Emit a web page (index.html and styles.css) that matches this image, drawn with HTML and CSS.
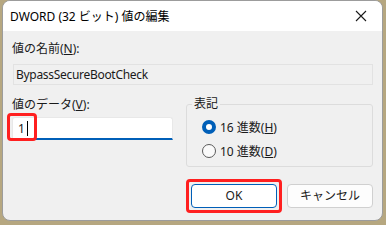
FILE: index.html
```html
<!DOCTYPE html>
<html lang="ja">
<head>
  <meta charset="UTF-8">
  <title>DWORD (32 ビット) 値の編集</title>
  <link rel="stylesheet" href="styles.css">
</head>
<body>
  <div class="window">
    <div class="title-bar">
      <span class="title">DWORD (32 ビット) 値の編集</span>
      <svg class="close" width="12" height="12" viewBox="0 0 12 12">
        <path d="M1 1 L11 11 M11 1 L1 11" stroke="#1a1a1a" stroke-width="1.1" fill="none"/>
      </svg>
    </div>
    <div class="content">
      <div class="label">値の名前(<u>N</u>):</div>
      <div class="name-box">BypassSecureBootCheck</div>
      <div class="row">
        <div class="data-col">
          <div class="label">値のデータ(<u>V</u>):</div>
          <div class="data-input">
            <span class="value">1</span><span class="caret"></span>
            <div class="mark mark-input"></div>
          </div>
        </div>
        <fieldset class="group">
          <legend>表記</legend>
          <div class="radios">
            <div class="radio-row">
              <span class="radio checked"></span>
              <span>16 進数(<u>H</u>)</span>
            </div>
            <div class="radio-row">
              <span class="radio"></span>
              <span>10 進数(<u>D</u>)</span>
            </div>
          </div>
        </fieldset>
      </div>
      <div class="buttons">
        <div class="btn btn-default">OK<div class="mark mark-ok"></div></div>
        <div class="btn">キャンセル</div>
      </div>
    </div>
  </div>
</body>
</html>
```

FILE: styles.css
```css
html, body {
  margin: 0;
  padding: 0;
  height: 100%;
  overflow: hidden;
}
body {
  background: #b6a780;
  font-family: "Noto Sans", "Noto Sans CJK JP", sans-serif;
  font-size: 12px;
  color: #1a1a1a;
}
.window {
  box-sizing: border-box;
  margin-left: 2px;
  width: 381px;
  height: 221px;
  border: 1px solid #9c9c9c;
  border-radius: 8px;
  background: #f0f0f0;
  overflow: hidden;
  display: flex;
  flex-direction: column;
}
.title-bar {
  height: 30px;
  background: #fff;
  display: flex;
  align-items: center;
  padding: 0 15px 0 7px;
  flex-shrink: 0;
}
.title {
  flex: 1;
  font-size: 12px;
  color: #000;
}
.close {
  display: block;
}
.content {
  padding: 10px 9px 0 9px;
  display: flex;
  flex-direction: column;
}
.label {
  line-height: 16px;
  height: 16px;
}
.name-box {
  box-sizing: border-box;
  margin: 7px 0 0 1px;
  height: 21px;
  line-height: 19px;
  padding-left: 2px;
  letter-spacing: -0.3px;
  border: 1px solid #e2e2e2;
  background: #f0f0f0;
  color: #1a1a1a;
}
.row {
  display: flex;
  gap: 13px;
  margin-top: 11px;
}
.data-col {
  width: 161px;
  padding-top: 1px;
}
.data-input {
  position: relative;
  box-sizing: border-box;
  margin-top: 4px;
  height: 23px;
  background: #fff;
  border: 1px solid #e8e8e8;
  border-bottom: 2px solid #005fb8;
  border-radius: 3px 3px 0 0;
  display: flex;
  align-items: center;
  padding-left: 5px;
}
.caret {
  display: inline-block;
  width: 1px;
  height: 15px;
  background: #000;
  margin-left: 2px;
}
.mark {
  position: absolute;
  box-sizing: border-box;
  border: 3px solid #ff1f1f;
  border-radius: 4px;
}
.mark-input {
  left: -6px;
  top: -5px;
  width: 30px;
  height: 28px;
}
.group {
  box-sizing: border-box;
  width: 187px;
  margin: 0;
  padding: 0;
  border: 1px solid #dcdcdc;
  border-radius: 3px;
}
.group legend {
  margin-left: 5px;
  padding: 0 2px;
  line-height: 16px;
}
.radios {
  padding: 5px 0 5px 15px;
  display: flex;
  flex-direction: column;
  gap: 4px;
}
.radio-row {
  height: 20px;
  display: flex;
  align-items: center;
  gap: 4px;
}
.radio {
  box-sizing: border-box;
  width: 14px;
  height: 14px;
  border-radius: 50%;
  border: 1px solid #5a5a5a;
  background: #fafafa;
}
.radio.checked {
  border: 4px solid #005fb8;
  background: #fff;
}
.buttons {
  display: flex;
  justify-content: flex-end;
  gap: 10px;
  margin-top: 17px;
}
.btn {
  position: relative;
  box-sizing: border-box;
  width: 86px;
  height: 24px;
  line-height: 22px;
  text-align: center;
  background: #fdfdfd;
  border: 1px solid #d0d0d0;
  border-radius: 4px;
}
.btn-default {
  border-color: #005fb8;
  background: #fff;
}
.mark-ok {
  left: -6px;
  top: -6px;
  width: 96px;
  height: 34px;
}
```
